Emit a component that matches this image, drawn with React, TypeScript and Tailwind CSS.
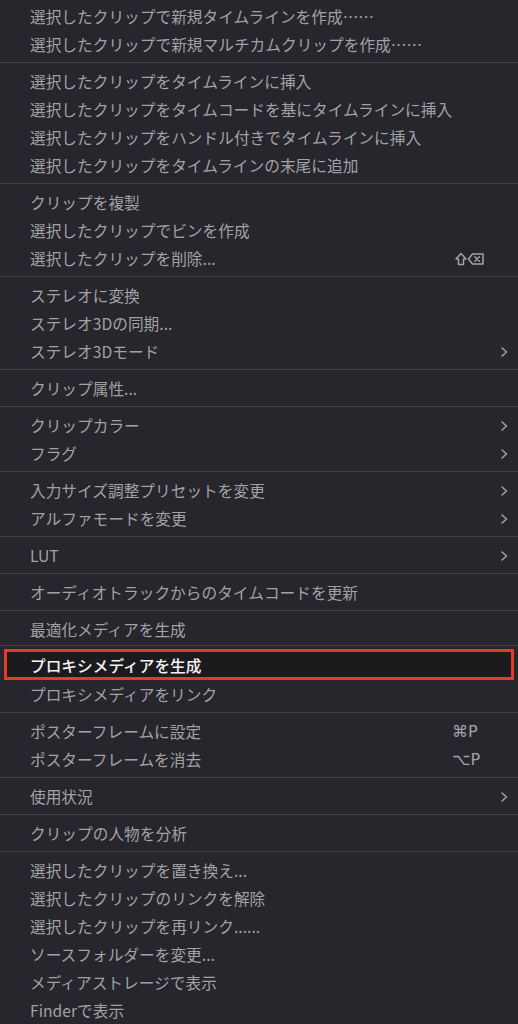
import React from "react";

type Item =
  | { kind: "sep"; tight?: boolean }
  | { kind: "item"; label: string; shortcut?: string; submenu?: boolean; active?: boolean };

const sep = (tight?: boolean): Item => ({ kind: "sep", tight });
const item = (label: string, extra: Partial<Omit<Extract<Item, { kind: "item" }>, "kind" | "label">> = {}): Item => ({
  kind: "item",
  label,
  ...extra,
});

const menu: Item[] = [
  item("選択したクリップで新規タイムラインを作成……"),
  item("選択したクリップで新規マルチカムクリップを作成……"),
  sep(),
  item("選択したクリップをタイムラインに挿入"),
  item("選択したクリップをタイムコードを基にタイムラインに挿入"),
  item("選択したクリップをハンドル付きでタイムラインに挿入"),
  item("選択したクリップをタイムラインの末尾に追加"),
  sep(),
  item("クリップを複製"),
  item("選択したクリップでビンを作成"),
  item("選択したクリップを削除...", { shortcut: "shift-delete" }),
  sep(),
  item("ステレオに変換"),
  item("ステレオ3Dの同期..."),
  item("ステレオ3Dモード", { submenu: true }),
  sep(),
  item("クリップ属性..."),
  sep(),
  item("クリップカラー", { submenu: true }),
  item("フラグ", { submenu: true }),
  sep(),
  item("入力サイズ調整プリセットを変更", { submenu: true }),
  item("アルファモードを変更", { submenu: true }),
  sep(),
  item("LUT", { submenu: true }),
  sep(),
  item("オーディオトラックからのタイムコードを更新"),
  sep(),
  item("最適化メディアを生成"),
  sep(true),
  item("プロキシメディアを生成", { active: true }),
  item("プロキシメディアをリンク"),
  sep(),
  item("ポスターフレームに設定", { shortcut: "⌘P" }),
  item("ポスターフレームを消去", { shortcut: "⌥P" }),
  sep(),
  item("使用状況", { submenu: true }),
  sep(),
  item("クリップの人物を分析"),
  sep(),
  item("選択したクリップを置き換え..."),
  item("選択したクリップのリンクを解除"),
  item("選択したクリップを再リンク......"),
  item("ソースフォルダーを変更..."),
  item("メディアストレージで表示"),
  item("Finderで表示"),
];

function Chevron() {
  return (
    <svg width="8" height="12" viewBox="0 0 8 12" className="shrink-0">
      <polyline points="2,2 6.5,6 2,10" fill="none" stroke="#a0a0a4" strokeWidth="1.6" strokeLinecap="round" strokeLinejoin="round" />
    </svg>
  );
}

// shift + delete glyphs, drawn since the fallback fonts render them too small
function ShiftDelete() {
  return (
    <svg width="30" height="14" viewBox="0 0 30 14" fill="none" stroke="#a2a2a6" strokeWidth="1.5" strokeLinejoin="round">
      <path d="M6 1.5 L11 7 H8.5 V12.5 H3.5 V7 H1 Z" />
      <path d="M17.5 2 H28 V12 H17.5 L13.5 7 Z" />
      <path d="M20 4.8 L24.4 9.2 M24.4 4.8 L20 9.2" strokeLinecap="round" />
    </svg>
  );
}

function MenuRow({ entry }: { entry: Extract<Item, { kind: "item" }> }) {
  if (entry.active) {
    return (
      <div className="mx-[4px] flex h-[31px] items-center border-[3px] border-[#e23d1f] bg-[#1b1b1e] pl-[23px] pt-[2px] text-[15.7px] font-medium text-[#f4f4f4]">
        {entry.label}
      </div>
    );
  }

  return (
    <div className="flex h-[28px] items-center pl-[30px] pr-[10px] pt-px text-[15.7px] text-[#a2a2a6]">
      <span className="flex-1 whitespace-nowrap">{entry.label}</span>
      {entry.shortcut ? (
        <span className="mr-[24px] flex w-[32px] items-center font-['DejaVu_Sans',sans-serif] text-[16px] text-[#a2a2a6]">
          {entry.shortcut === "shift-delete" ? (
            <span className="ml-[3px]">
              <ShiftDelete />
            </span>
          ) : (
            entry.shortcut
          )}
        </span>
      ) : null}
      {entry.submenu ? <Chevron /> : null}
    </div>
  );
}

export default function App() {
  return (
    <div className="h-[1024px] w-[518px] overflow-hidden bg-[#26262c] pt-[2px] font-['Noto_Sans_CJK_JP','Noto_Sans',sans-serif]">
      {menu.map((entry, index) =>
        entry.kind === "sep" ? (
          <div key={index} className={entry.tight ? "flex h-[6px] items-start pt-[2px]" : "flex h-[9px] items-center"}>
            <div className="h-px w-full bg-[#404046]" />
          </div>
        ) : (
          <MenuRow key={index} entry={entry} />
        ),
      )}
    </div>
  );
}
